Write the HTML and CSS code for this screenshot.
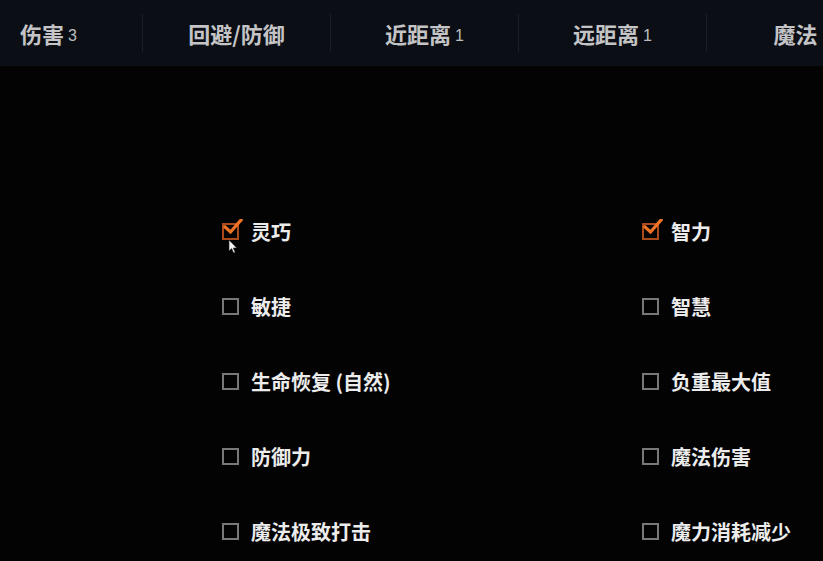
FILE: index.html
```html
<!DOCTYPE html>
<html lang="zh-CN">
<head>
<meta charset="utf-8">
<title>属性筛选</title>
<link rel="stylesheet" href="styles.css">
</head>
<body>
<header class="tabbar">
  <div class="tabs">
    <div class="tab">伤害<span class="count">3</span></div>
    <div class="tab">回避/防御</div>
    <div class="tab">近距离<span class="count">1</span></div>
    <div class="tab">远距离<span class="count">1</span></div>
    <div class="tab last">魔法</div>
  </div>
</header>
<main class="content">
  <div class="grid">
    <div class="option">
      <span class="box checked">
        <svg class="tick" viewBox="0 0 20 18" width="20" height="18"><path d="M2 8 L7.5 13 L18 1" fill="none" stroke="#ee7326" stroke-width="3.2" stroke-linecap="square"/></svg>
        <svg class="cursor" viewBox="0 0 10 15" width="10" height="15"><path d="M1 1 L1 12 L3.6 9.6 L5.6 14 L7.2 13.2 L5.3 9 L8.8 9 Z" fill="#f2f2f2" stroke="#222" stroke-width="0.6"/></svg>
      </span>
      <span class="label">灵巧</span>
    </div>
    <div class="option">
      <span class="box checked">
        <svg class="tick" viewBox="0 0 20 18" width="20" height="18"><path d="M2 8 L7.5 13 L18 1" fill="none" stroke="#ee7326" stroke-width="3.2" stroke-linecap="square"/></svg>
      </span>
      <span class="label">智力</span>
    </div>
    <div class="option"><span class="box"></span><span class="label">敏捷</span></div>
    <div class="option"><span class="box"></span><span class="label">智慧</span></div>
    <div class="option"><span class="box"></span><span class="label">生命恢复 (自然)</span></div>
    <div class="option"><span class="box"></span><span class="label">负重最大值</span></div>
    <div class="option"><span class="box"></span><span class="label">防御力</span></div>
    <div class="option"><span class="box"></span><span class="label">魔法伤害</span></div>
    <div class="option"><span class="box"></span><span class="label">魔法极致打击</span></div>
    <div class="option"><span class="box"></span><span class="label">魔力消耗减少</span></div>
  </div>
</main>
</body>
</html>
```
FILE: styles.css
```css
* { box-sizing: border-box; }
html, body {
  margin: 0;
  padding: 0;
  background: #030304;
  width: 823px;
  height: 561px;
  overflow: hidden;
  font-family: "Noto Sans CJK SC", "Noto Sans", sans-serif;
}
.tabbar {
  height: 66px;
  background: #0b0e15;
  display: flex;
  align-items: center;
  overflow: hidden;
}
.tabs {
  display: flex;
  margin-left: -45px;
}
.tab {
  flex: 0 0 188px;
  height: 38px;
  display: flex;
  align-items: center;
  justify-content: center;
  border-right: 1px solid #1b1f27;
  color: #c4c4c6;
  font-size: 22px;
  font-weight: 700;
  line-height: 1;
}
.tab.last {
  padding-right: 10px;
}
.tab .count {
  font-family: "Liberation Sans", "Noto Sans", sans-serif;
  font-size: 16px;
  font-weight: 400;
  margin-left: 4px;
  margin-top: 5px;
  color: #bdbdbf;
}
.content {
  padding: 128px 0 0 222px;
}
.grid {
  display: grid;
  grid-template-columns: 420px 1fr;
  grid-auto-rows: 75px;
}
.option {
  display: flex;
  align-items: center;
  gap: 12px;
}
.box {
  position: relative;
  width: 17px;
  height: 17px;
  border: 2px solid #78787a;
  flex: 0 0 17px;
}
.box.checked {
  border-color: #a94a1a;
}
.tick {
  position: absolute;
  left: -1px;
  top: -6px;
}
.cursor {
  position: absolute;
  left: 4px;
  top: 14px;
}
.label {
  color: #ececec;
  font-size: 20px;
  font-weight: 700;
  line-height: 1;
}
```
